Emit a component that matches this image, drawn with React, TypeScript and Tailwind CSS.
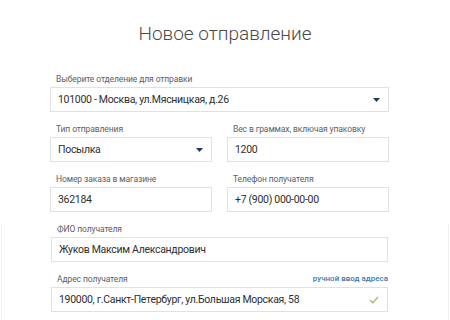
const font = { fontFamily: 'Roboto, "Noto Sans", sans-serif' };

function Arrow() {
  return (
    <svg width="7" height="4" viewBox="0 0 7 4" className="shrink-0">
      <path d="M0 0 H7 L3.5 4 Z" fill="#1f3b5a" />
    </svg>
  );
}

function Check() {
  return (
    <svg width="10" height="8" viewBox="0 0 10 8" className="shrink-0">
      <path d="M1 4.2 L3.8 6.8 L9 1" fill="none" stroke="#a5bb7c" strokeWidth="1.3" />
    </svg>
  );
}

function Field({
  label,
  value,
  right,
  link,
}: {
  label: string;
  value: string;
  right?: React.ReactNode;
  link?: string;
}) {
  return (
    <div className="flex flex-col">
      <div className="flex h-[12px] items-center justify-between pl-[6px] mb-[2px]">
        <span className="text-[8.5px] leading-[12px] tracking-[-0.1px] text-[#606060]">{label}</span>
        {link && <span className="text-[8px] leading-[12px] font-medium text-[#3a77ad]">{link}</span>}
      </div>
      <div className="flex h-[25px] items-center justify-between border border-[#e1e1e1] bg-white pl-[7px] pr-[8px]">
        <span className="text-[10.5px] tracking-[-0.3px] text-[#2e2e2e] whitespace-nowrap">{value}</span>
        {right}
      </div>
    </div>
  );
}

export default function App() {
  return (
    <div className="w-[450px] h-[320px] bg-white overflow-hidden" style={font}>
      <h1 className="mt-[20px] h-[28px] text-center text-[19px] leading-[28px] font-light text-[#4a4a4a]">
        Новое отправление
      </h1>

      <div className="ml-[50px] w-[339px] mt-[25px] flex flex-col gap-[11px]">
        <Field label="Выберите отделение для отправки" value="101000 - Москва, ул.Мясницкая, д.26" right={<Arrow />} />
        <div className="grid grid-cols-2 gap-x-[15px]">
          <Field label="Тип отправления" value="Посылка" right={<Arrow />} />
          <Field label="Вес в граммах, включая упаковку" value="1200" />
        </div>
        <div className="grid grid-cols-2 gap-x-[15px]">
          <Field label="Номер заказа в магазине" value="362184" />
          <Field label="Телефон получателя" value="+7 (900) 000-00-00" />
        </div>
      </div>

      <div className="mt-[11px] mx-px border-x border-[#f1f1f1] pl-[49px] pr-[60px] pb-[20px]">
        <div className="flex flex-col gap-[11px]">
          <Field label="ФИО получателя" value="Жуков Максим Александрович" />
          <Field
            label="Адрес получателя"
            value="190000, г.Санкт-Петербург, ул.Большая Морская, 58"
            link="ручной ввод адреса"
            right={<Check />}
          />
        </div>
      </div>
    </div>
  );
}
